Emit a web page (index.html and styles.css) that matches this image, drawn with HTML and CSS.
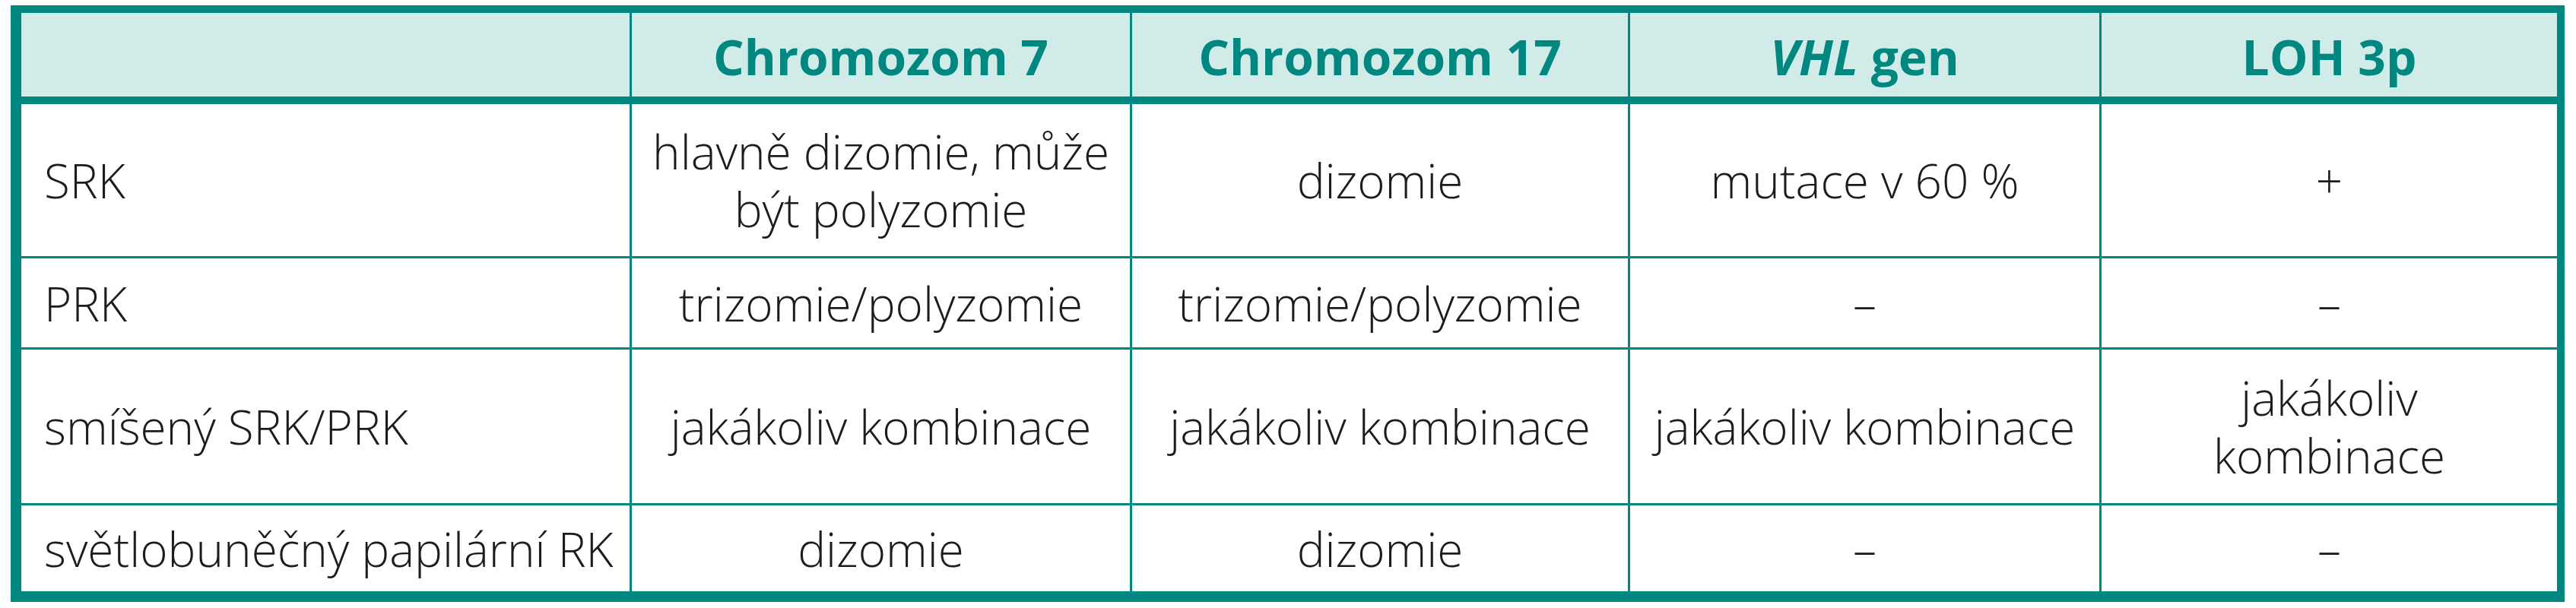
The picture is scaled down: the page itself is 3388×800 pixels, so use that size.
FILE: index.html
```html
<!DOCTYPE html>
<html lang="cs">
<head>
<meta charset="utf-8">
<title>Tabulka</title>
<link rel="stylesheet" href="styles.css">
</head>
<body>
<table class="grid">
  <colgroup>
    <col class="c1"><col class="c2"><col class="c3"><col class="c4"><col class="c5">
  </colgroup>
  <thead>
    <tr class="head">
      <th></th>
      <th>Chromozom 7</th>
      <th>Chromozom 17</th>
      <th><em>VHL</em> gen</th>
      <th class="last">LOH 3p</th>
    </tr>
  </thead>
  <tbody>
    <tr class="r1">
      <td class="label">SRK</td>
      <td>hlavně dizomie, může<br>být polyzomie</td>
      <td>dizomie</td>
      <td>mutace v 60 %</td>
      <td class="last">+</td>
    </tr>
    <tr class="r2">
      <td class="label">PRK</td>
      <td>trizomie/polyzomie</td>
      <td>trizomie/polyzomie</td>
      <td>–</td>
      <td class="last">–</td>
    </tr>
    <tr class="r3">
      <td class="label">smíšený SRK/PRK</td>
      <td>jakákoliv kombinace</td>
      <td>jakákoliv kombinace</td>
      <td>jakákoliv kombinace</td>
      <td class="last">jakákoliv<br>kombinace</td>
    </tr>
    <tr class="r4 end">
      <td class="label">světlobuněčný papilární RK</td>
      <td>dizomie</td>
      <td>dizomie</td>
      <td>–</td>
      <td class="last">–</td>
    </tr>
  </tbody>
</table>
</body>
</html>
```

FILE: styles.css
```css
html, body {
  margin: 0;
  padding: 0;
  background: #ffffff;
}

body {
  width: 3388px;
  height: 800px;
  overflow: hidden;
}

.grid {
  margin: 7px 0 0 14px;
  border-collapse: separate;
  border-spacing: 0;
  table-layout: fixed;
  width: 3359px;
  border-style: solid;
  border-color: #00877f;
  border-width: 10px 10px 14px 14px;
  font-family: "Open Sans", "Liberation Sans", sans-serif;
  font-stretch: 97%;
  font-weight: 300;
  font-size: 62px;
  line-height: 76px;
  color: #1c1c1c;
}

.c1 { width: 803px; }
.c2 { width: 658px; }
.c3 { width: 655px; }
.c4 { width: 620px; }
.c5 { width: 599px; }

.grid th,
.grid td {
  padding: 0 8px;
  text-align: center;
  vertical-align: middle;
  white-space: nowrap;
  border-right: 3px solid #00877f;
  border-bottom: 3px solid #00877f;
  box-sizing: border-box;
}

.grid .last {
  border-right: none;
}

.grid .end td {
  border-bottom: none;
}

.head th {
  height: 120px;
  padding-top: 6px;
  background: #d0ebe8;
  border-bottom: 10px solid #00877f;
  color: #00877f;
  font-weight: 700;
  font-stretch: 88%;
  font-size: 64px;
}

.head em {
  font-style: italic;
}

.grid td.label {
  text-align: left;
  padding-left: 30px;
}

.r1 td { height: 203px; }
.r2 td { height: 120px; }
.r3 td { height: 205px; }
.r4 td { height: 113px; }
```
